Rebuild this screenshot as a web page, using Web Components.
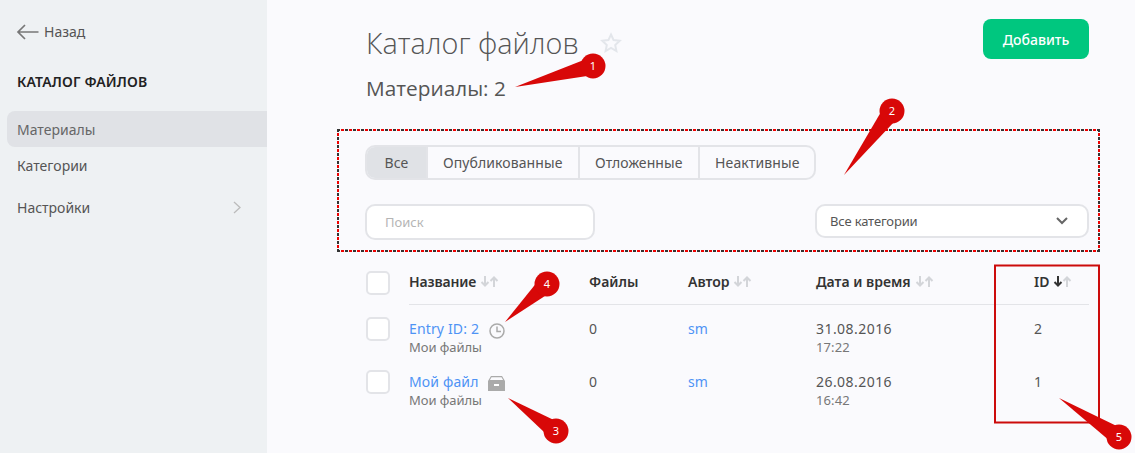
<!DOCTYPE html>
<html lang="ru">
<head>
<meta charset="utf-8">
<title>Каталог файлов</title>
<style>
  html, body { margin: 0; height: 100%; }
  body { font-family: "Noto Sans", sans-serif; font-size: 14px; color: #444; background: #fafafd; overflow: hidden; }
</style>
</head>
<body>
<app-shell>
  <side-nav slot="side"></side-nav>
  <page-header></page-header>
  <filter-panel></filter-panel>
  <files-table></files-table>
</app-shell>
<note-layer></note-layer>

<script>
class AppShell extends HTMLElement {
  constructor() {
    super();
    this.attachShadow({ mode: 'open' });
    this.shadowRoot.innerHTML = `
      <style>
        :host { display: flex; width: 1135px; height: 453px; }
        .side { flex: 0 0 267px; background: #eef1f3; }
        main { flex: 1; padding: 19px 46px 0 99px; min-width: 0; }
      </style>
      <div class="side"><slot name="side"></slot></div>
      <main><slot></slot></main>
    `;
  }
}

class SideNav extends HTMLElement {
  constructor() {
    super();
    this.attachShadow({ mode: 'open' });
    this.shadowRoot.innerHTML = `
      <style>
        :host { display: block; padding: 21px 0 0 7px; color: #555; }
        .back { display: flex; align-items: center; gap: 5px; margin-left: 9px; height: 21px; font-size: 14px; color: #555; }
        h2 { margin: 29px 0 19px 10px; font-size: 14px; line-height: 21px; font-weight: 600; letter-spacing: .15px; color: #222; }
        a { display: flex; align-items: center; justify-content: space-between; height: 36px; padding: 0 26px 0 10px; color: #555; }
        a.on { background: #e0e2e6; border-radius: 8px 0 0 8px; color: #666; }
        a.set { margin-top: 6px; }
      </style>
      <div class="back">
        <svg width="23" height="16" viewBox="0 0 23 16" fill="none" stroke="#777" stroke-width="1.7"><path d="M22.500 8H2M9 1L2 8l7 7"/></svg>
        <span>Назад</span>
      </div>
      <h2>КАТАЛОГ ФАЙЛОВ</h2>
      <a class="on">Материалы</a>
      <a>Категории</a>
      <a class="set">Настройки
        <svg width="8" height="13" viewBox="0 0 8 13" fill="none" stroke="#bbb" stroke-width="1.3"><path d="M1 1l6 5.500L1 12"/></svg>
      </a>
    `;
  }
}

class PageHeader extends HTMLElement {
  constructor() {
    super();
    this.attachShadow({ mode: 'open' });
    this.shadowRoot.innerHTML = `
      <style>
        :host { display: block; height: 110px; }
        .top { display: flex; align-items: flex-start; }
        h1 { margin: 4px 0 0; font: 300 28.800px/40px "Open Sans", sans-serif; color: #555; }
        svg { margin: 13px 0 0 21px; }
        button { margin-left: auto; width: 106px; height: 40px; border: 0; border-radius: 8px; background: #00c77f; color: #fff; font: 500 14px "Noto Sans", sans-serif; }
        p { margin: 12px 0 0; font: 400 20.800px/27px "Open Sans", sans-serif; color: #555; }
      </style>
      <div class="top">
        <h1>Каталог файлов</h1>
        <svg width="22" height="21" viewBox="0 0 22 21" fill="none" stroke="#e3e6eb" stroke-width="2"><path d="M11 2.500l2.600 5.600 6.100.7-4.500 4.200 1.200 6-5.400-3-5.400 3 1.200-6-4.500-4.200 6.100-.7z"/></svg>
        <button>Добавить</button>
      </div>
      <p>Материалы: 2</p>
    `;
  }
}

class FilterPanel extends HTMLElement {
  constructor() {
    super();
    this.attachShadow({ mode: 'open' });
    this.shadowRoot.innerHTML = `
      <style>
        :host { display: block; position: relative; margin: 0 -11px 0 -29px; height: 123px; padding: 16px 11px 0 28px; box-sizing: border-box; --ants: #333 0 3px, transparent 3px 4px, #e00 4px 7px, transparent 7px 8px;
          background:
            repeating-linear-gradient(90deg, var(--ants)) top / 100% 2px no-repeat,
            repeating-linear-gradient(90deg, var(--ants)) bottom / 100% 2px no-repeat,
            repeating-linear-gradient(0deg, var(--ants)) left / 2px 100% no-repeat,
            repeating-linear-gradient(0deg, var(--ants)) right / 2px 100% no-repeat;
        }
        .tabs { display: inline-flex; height: 35px; box-sizing: border-box; border: 2px solid #e3e4e8; border-radius: 10px; overflow: hidden; color: #555; letter-spacing: .1px; }
        .tabs span { display: flex; align-items: center; padding: 0 15px; border-left: 2px solid #e3e4e8; }
        .tabs span:first-child { border-left: 0; background: #e0e2e6; padding: 0 17.500px; }
        .tabs span:nth-child(3) { padding: 0 15.500px; }
        .row { display: flex; justify-content: space-between; align-items: flex-start; margin-top: 24px; }
        .search, .select { display: flex; align-items: center; box-sizing: border-box; background: #fff; border: 2px solid #e3e4e8; border-radius: 10px; }
        .search { width: 230px; height: 36px; padding-left: 18px; color: #b5b5b5; font-size: 13px; }
        .select { width: 274px; height: 34px; padding: 0 19px 0 13px; justify-content: space-between; font-size: 13px; letter-spacing: -.15px; color: #555; }
      </style>
      <div class="tabs"><span>Все</span><span>Опубликованные</span><span>Отложенные</span><span>Неактивные</span></div>
      <div class="row">
        <div class="search">Поиск</div>
        <div class="select">Все категории
          <svg width="12" height="8" viewBox="0 0 12 8" fill="none" stroke="#666" stroke-width="2"><path d="M1 1l5 5 5-5"/></svg>
        </div>
      </div>
    `;
  }
}

class SortArrows extends HTMLElement {
  constructor() {
    super();
    this.attachShadow({ mode: 'open' });
    const down = this.hasAttribute('active') ? '#333' : '#d3d5d9';
    this.shadowRoot.innerHTML = `
      <style>:host { display: inline-flex; margin-left: 4px; }</style>
      <svg width="19" height="11" viewBox="0 0 19 11" fill="none" stroke-width="2">
        <path d="M5 0v9M1.500 6L5 9.500 8.500 6" stroke="${down}"/>
        <path d="M14 11V2M10.500 5L14 1.500 17.500 5" stroke="#d3d5d9"/>
      </svg>
    `;
  }
}

class FileCheck extends HTMLElement {
  constructor() {
    super();
    this.attachShadow({ mode: 'open' });
    this.shadowRoot.innerHTML = `
      <style>:host { display: block; width: 24px; height: 24px; box-sizing: border-box; background: #fff; border: 2px solid #e3e4e8; border-radius: 5px; }</style>
    `;
  }
}

class FilesTable extends HTMLElement {
  constructor() {
    super();
    this.attachShadow({ mode: 'open' });
    const clock = `<svg style="margin-left:1px;margin-top:4px" width="16" height="16" viewBox="0 0 16 16" fill="none" stroke="#aaa" stroke-width="1.500"><circle cx="8" cy="8" r="7"/><path d="M8 3.500V8.500H12"/></svg>`;
    const box = `<svg width="17" height="15" viewBox="0 0 17 15"><path d="M3 0h11l3 5H0z" fill="#aaa"/><path d="M3.500 1.200h10l1.600 2.800H1.900z" fill="#fafafd"/><path d="M0 5h17v10H0z" fill="#aaa"/><path d="M6 8h5v2H6z" fill="#fff"/></svg>`;
    const row = (name, icon, author, date, time, id) => `
      <div class="row">
        <file-check></file-check>
        <div><div class="name"><a>${name}</a>${icon}</div><small>Мои файлы</small></div>
        <div>0</div>
        <div><a>${author}</a></div>
        <div class="date">${date}<small>${time}</small></div>
        <div>${id}</div>
      </div>`;
    this.shadowRoot.innerHTML = `
      <style>
        :host { display: block; margin-top: 19px; }
        .row { display: grid; grid-template-columns: 43px 180px 99px 128px 218px 55px; height: 53px; align-items: start; line-height: 19px; color: #555; }
        .row > file-check { margin-top: -2px; }
        .head { height: 34px; font-weight: 600; color: #333; align-items: start; position: relative; margin-bottom: 14px; }
        .head > file-check { margin-top: 0; }
        .head > div { display: flex; align-items: center; height: 24px; padding-bottom: 3px; box-sizing: border-box; }
        .head > .title { letter-spacing: -.15px; }
        .head::after { content: ""; position: absolute; left: 43px; right: 0; bottom: 0; height: 1px; background: #e3e4e8; }
        a { color: #4e93f5; letter-spacing: .15px; }
        small { display: block; font-size: 13px; line-height: 17px; margin-top: 1px; letter-spacing: -.05px; color: #777; }
        .date { letter-spacing: .45px; }
        .date small { letter-spacing: .1px; }
        .name { display: flex; align-items: center; gap: 9px; height: 19px; }
        .name svg { margin-top: 3px; flex: none; }
      </style>
      <div class="row head">
        <file-check></file-check>
        <div class="title">Название<sort-arrows></sort-arrows></div>
        <div>Файлы</div>
        <div>Автор<sort-arrows></sort-arrows></div>
        <div>Дата и время<sort-arrows></sort-arrows></div>
        <div>ID<sort-arrows active></sort-arrows></div>
      </div>
      ${row('Entry ID: 2', clock, 'sm', '31.08.2016', '17:22', '2')}
      ${row('Мой файл', box, 'sm', '26.08.2016', '16:42', '1')}
    `;
  }
}

class NoteLayer extends HTMLElement {
  constructor() {
    super();
    this.attachShadow({ mode: 'open' });
    // pin: circle centre, then the tip of its tail
    const pin = (n, cx, cy, tx, ty) => {
      const a = Math.atan2(ty - cy, tx - cx);
      const w = 9;
      const px = Math.round((cx - Math.sin(a) * w) * 10) / 10;
      const py = Math.round((cy + Math.cos(a) * w) * 10) / 10;
      const qx = Math.round((cx + Math.sin(a) * w) * 10) / 10;
      const qy = Math.round((cy - Math.cos(a) * w) * 10) / 10;
      return `<path d="M${px} ${py}L${tx} ${ty}L${qx} ${qy}Z" fill="#d80808"/>
        <circle cx="${cx}" cy="${cy}" r="12.5" fill="#d80808"/>
        <text x="${cx}" y="${cy + 4}">${n}</text>`;
    };
    this.shadowRoot.innerHTML = `
      <style>
        :host { position: absolute; left: 0; top: 0; width: 1135px; height: 453px; pointer-events: none; }
        svg { display: block; }
        text { font: 11px "Noto Sans", sans-serif; fill: #fff; text-anchor: middle; }
      </style>
      <svg width="1135" height="453" viewBox="0 0 1135 453">
        <rect x="995" y="265.500" width="104" height="157" fill="none" stroke="#cc0b0b" stroke-width="2"/>
        ${pin(1, 593, 66, 515, 87)}
        ${pin(2, 892, 111, 844, 175)}
        ${pin(3, 556, 431, 508, 398)}
        ${pin(4, 547, 284, 505, 322)}
        ${pin(5, 1119, 437, 1059, 398)}
      </svg>
    `;
  }
}

customElements.define('app-shell', AppShell);
customElements.define('side-nav', SideNav);
customElements.define('page-header', PageHeader);
customElements.define('filter-panel', FilterPanel);
customElements.define('sort-arrows', SortArrows);
customElements.define('file-check', FileCheck);
customElements.define('files-table', FilesTable);
customElements.define('note-layer', NoteLayer);
</script>
</body>
</html>
